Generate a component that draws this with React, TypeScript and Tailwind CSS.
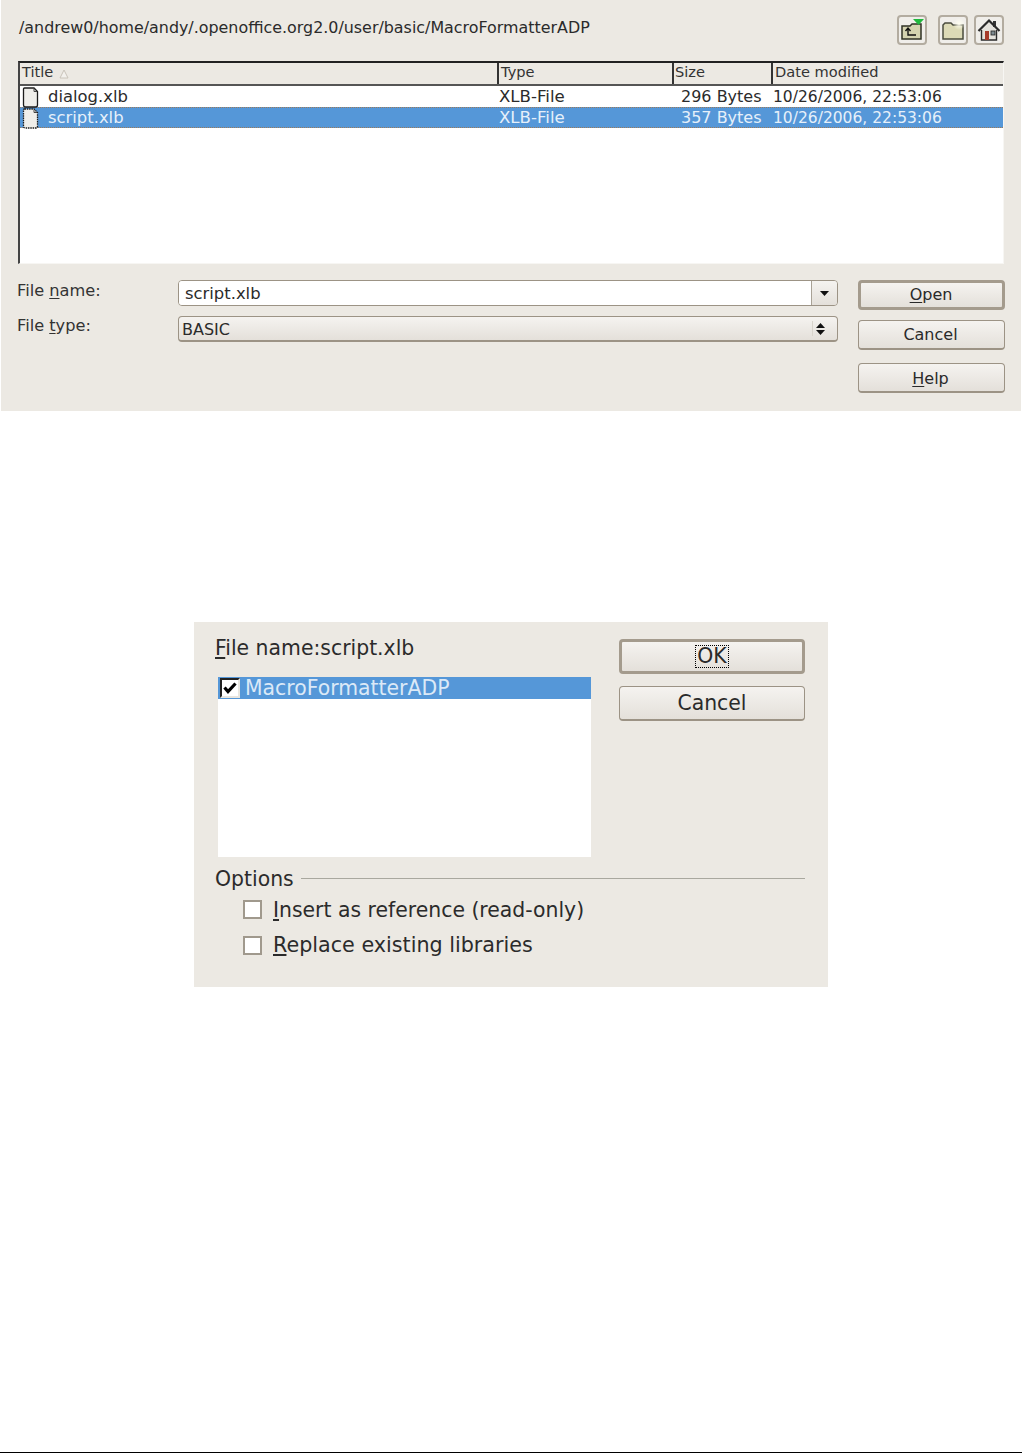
import React from "react";

const font = "font-['DejaVu_Sans',sans-serif]";

function FileIcon({ selected }: { selected?: boolean }) {
  return (
    <svg width="17" height="21" viewBox="0 0 17 21" className="shrink-0">
      <path d="M2.5 1H12L15.5 4.5V18Q15.5 20 13.5 20H3.5Q1.5 20 1.5 18V2Q1.5 1 2.5 1Z" fill="#efeeea" stroke="#1c1c1c" strokeWidth="1.3" strokeDasharray={selected ? "1.5 0.8" : undefined} />
      <path d="M12 1.5V4.5H15" fill="none" stroke="#444" strokeWidth="1" />
    </svg>
  );
}

function ToolBtn({ children }: { children: React.ReactNode }) {
  return (
    <div className="w-[30px] h-[30px] rounded-[4px] border-2 border-[#b3aca0] bg-[#f0eeea] flex items-center justify-center">
      {children}
    </div>
  );
}

function Btn({ children, def, h, focus }: { children: React.ReactNode; def?: boolean; h: string; focus?: boolean }) {
  return (
    <div className={`${h} w-full rounded-[4px] bg-gradient-to-b from-[#f5f3f0] to-[#e4e0da] flex items-center justify-center text-[#2a2a2a] ${def ? "border-[3px] border-[#a49b8d]" : "border border-[#9c9385] border-b-2"}`}>
      {focus ? <span className="border border-dotted border-black px-px leading-[21px]">{children}</span> : children}
    </div>
  );
}

function Cell({ w, children, className = "" }: { w: string; children: React.ReactNode; className?: string }) {
  return <div className={`${w} shrink-0 flex items-center h-full whitespace-nowrap ${className}`}>{children}</div>;
}

function Check() {
  return <div className="w-[19px] h-[19px] border-2 border-[#a0998d] bg-white shrink-0" />;
}

export default function App() {
  return (
    <div className={`${font} w-[1022px] h-[1453px] bg-white flex flex-col text-[#2b2b2b] overflow-hidden`}>
      {/* File dialog */}
      <div className="ml-px w-[1020px] h-[411px] bg-[#ece9e3] shrink-0 flex flex-col">
        <div className="h-[61px] flex items-start shrink-0">
          <div className="ml-[18px] mt-[18px] text-[15.9px] leading-5 whitespace-nowrap">/andrew0/home/andy/.openoffice.org2.0/user/basic/MacroFormatterADP</div>
          <div className="ml-auto mr-[17px] mt-[15px] flex">
            <ToolBtn>
              <svg width="24" height="24" viewBox="0 0 24 24">
                <path d="M2 8H10L12 6H21V21H2Z" fill="#d4d3b0" stroke="#2f3225" strokeWidth="1.5" />
                <path d="M13 1H24L18.5 7Z" fill="#1fb83c" />
                <path d="M8 11V17H16M5.5 13L8 10L10.5 13" fill="none" stroke="#111" strokeWidth="1.4" />
              </svg>
            </ToolBtn>
            <div className="ml-[11px]">
              <ToolBtn>
                <svg width="24" height="24" viewBox="0 0 24 24">
                  <defs>
                    <radialGradient id="glow"><stop offset="0" stopColor="#fffef0" /><stop offset="1" stopColor="#fffef0" stopOpacity="0" /></radialGradient>
                  </defs>
                  <path d="M2 7L4 5H10L12 7H22V21H2Z" fill="#dcdab6" stroke="#4a4c3e" strokeWidth="1.5" />
                  <circle cx="18" cy="6" r="6" fill="url(#glow)" />
                </svg>
              </ToolBtn>
            </div>
            <div className="ml-[6px]">
              <ToolBtn>
                <svg width="24" height="24" viewBox="0 0 24 24">
                  <rect x="16" y="3" width="3" height="6" fill="#333" />
                  <path d="M5 12L12 4L19 12V22H5Z" fill="#e4e2dc" />
                  <path d="M1.5 13L12 2.5L22.5 13" fill="none" stroke="#2a2a2a" strokeWidth="2.2" />
                  <path d="M4.5 12V22H19.5V12" fill="none" stroke="#2a2a2a" strokeWidth="1.4" />
                  <rect x="8" y="13" width="4" height="9" fill="#a63a2a" />
                  <rect x="14" y="13" width="4" height="4" fill="#7d8a90" stroke="#222" strokeWidth="0.8" />
                </svg>
              </ToolBtn>
            </div>
          </div>
        </div>

        {/* table */}
        <div className="ml-[17px] w-[986px] h-[203px] shrink-0 bg-white border-t-2 border-l-2 border-t-[#222] border-l-[#444] border-r border-b border-r-[#f7f6f3] border-b-[#f7f6f3]">
          <div className="h-[23px] flex bg-[#ece9e3] border-b-2 border-[#555] text-[14.6px] text-[#333]">
            <Cell w="w-[477px]" className="pl-[2px] gap-[6px] pb-[3px]">
              Title
              <svg width="10" height="10" viewBox="0 0 10 10" className="mt-1"><path d="M5 1L9 9H1Z" fill="#f3f1ed" stroke="#c9c4ba" /></svg>
            </Cell>
            <Cell w="w-[175px]" className="pl-[2px] pb-[3px] border-l-2 border-[#333]">Type</Cell>
            <Cell w="w-[99px]" className="pl-[1px] pb-[3px] border-l-2 border-[#333]">Size</Cell>
            <Cell w="w-[232px]" className="pl-[2px] pb-[3px] border-l-2 border-[#333]">Date modified</Cell>
          </div>
          <div className="h-[21px] flex pt-px">
            <Cell w="w-[478px]" className="pl-[2px] gap-[9px] text-[16.4px]"><FileIcon />dialog.xlb</Cell>
            <Cell w="w-[174px]" className="pl-[1px] text-[16.6px]">XLB-File</Cell>
            <Cell w="w-[99px]" className="pl-[9px] text-[16px]">296 Bytes</Cell>
            <Cell w="w-[232px]" className="pl-[2px] pt-px text-[15.5px]">10/26/2006, 22:53:06</Cell>
          </div>
          <div className="h-[21px] flex pt-px bg-[#5597d8] text-[#e6f0fa] border-y border-dotted border-y-[#9c7a5a]">
            <Cell w="w-[478px]" className="pl-[2px] gap-[9px] text-[16.4px]"><FileIcon selected />script.xlb</Cell>
            <Cell w="w-[174px]" className="pl-[1px] text-[16.6px]">XLB-File</Cell>
            <Cell w="w-[99px]" className="pl-[9px] text-[16px]">357 Bytes</Cell>
            <Cell w="w-[232px]" className="pl-[2px] pt-px text-[15.5px]">10/26/2006, 22:53:06</Cell>
          </div>
        </div>

        {/* form */}
        <div className="flex mt-[16px] text-[16px]">
          <div className="w-[177px] shrink-0 pl-[16px] flex flex-col text-[16.2px] text-[#333]">
            <div className="mt-px h-[20px] leading-5">File <u className="underline-offset-2">n</u>ame:</div>
            <div className="mt-[15px] h-[20px] leading-5">File <u className="underline-offset-2">t</u>ype:</div>
          </div>
          <div className="w-[660px] shrink-0 flex flex-col">
            <div className="h-[26px] flex rounded-[4px] border border-[#9c9385] overflow-hidden">
              <div className="flex-1 bg-white flex items-center pl-[6px] pt-[2px] text-[16.4px]">script.xlb</div>
              <div className="w-[26px] border-l border-[#a9a296] bg-gradient-to-b from-[#f5f3f0] to-[#e4e0da] flex items-center justify-center">
                <svg width="9" height="5" viewBox="0 0 9 5"><path d="M0 0H9L4.5 5Z" fill="#111" /></svg>
              </div>
            </div>
            <div className="mt-[10px] h-[26px] flex rounded-[4px] border border-[#9c9385] border-b-2 bg-gradient-to-b from-[#f5f3f0] to-[#e4e0da] overflow-hidden">
              <div className="flex-1 flex items-center pl-[3px] pt-[2px]">BASIC</div>
              <div className="w-[25px] my-1 pr-[10px] border-l border-[#d8d4cc] flex flex-col items-center justify-center gap-[2px]">
                <svg width="9" height="5" viewBox="0 0 9 5"><path d="M0 5H9L4.5 0Z" fill="#111" /></svg>
                <svg width="9" height="5" viewBox="0 0 9 5"><path d="M0 0H9L4.5 5Z" fill="#111" /></svg>
              </div>
            </div>
          </div>
          <div className="ml-[20px] w-[147px] shrink-0 flex flex-col">
            <Btn def h="h-[30px]"><span className="pr-px"><u className="underline-offset-2">O</u>pen</span></Btn>
            <div className="mt-[10px] w-full"><Btn h="h-[30px]"><span className="pt-px pr-[2px]">Cancel</span></Btn></div>
            <div className="mt-[13px] w-full"><Btn h="h-[30px]"><span className="pt-[2px] pr-[2px]"><u className="underline-offset-2">H</u>elp</span></Btn></div>
          </div>
        </div>
      </div>

      {/* Import dialog */}
      <div className="mt-[211px] ml-[194px] w-[634px] h-[365px] bg-[#ece9e3] shrink-0 flex text-[20.4px]">
        <div className="flex-1 min-w-0 flex flex-col pl-[21px]">
          <div className="flex">
            <div className="w-[404px] shrink-0 flex flex-col">
              <div className="mt-[13px] h-[26px] leading-[26px] whitespace-nowrap"><u className="underline-offset-2">F</u>ile name:script.xlb</div>
              <div className="mt-[16px] ml-[3px] w-[373px] h-[180px] bg-white">
                <div className="h-[22px] bg-[#5597d8] text-[#dbe9f7] flex items-center pl-[2px] gap-[5px] whitespace-nowrap">
                  <div className="w-[20px] h-[20px] border-2 border-l-[#222] border-t-[#222] border-r-[#e8e6e0] border-b-[#e8e6e0] bg-white flex items-center justify-center shrink-0">
                    <svg width="14" height="12" viewBox="0 0 14 12"><path d="M1.5 5.5L5 9.5L12.5 1.5" fill="none" stroke="#000" strokeWidth="3.2" /></svg>
                  </div>
                  <span className="pt-px">MacroFormatterADP</span>
                </div>
              </div>
            </div>
            <div className="w-[186px] shrink-0 flex flex-col mt-[17px] text-[#2b2b2b]">
              <Btn def focus h="h-[35px]">OK</Btn>
              <div className="mt-[12px] w-full"><Btn h="h-[35px]"><span className="pt-px">Cancel</span></Btn></div>
            </div>
          </div>
          <div className="mt-[8px] h-[26px] flex items-center gap-[7px] w-[590px]">
            <span className="pt-[2px]">Options</span>
            <div className="flex-1 border-t border-[#a9a89f]" />
          </div>
          <div className="mt-[5px] ml-[28px] h-[26px] flex items-center gap-[11px] whitespace-nowrap">
            <Check />
            <span className="pt-[2px]"><u className="underline-offset-2">I</u>nsert as reference (read-only)</span>
          </div>
          <div className="mt-[10px] ml-[28px] h-[26px] flex items-center gap-[11px] whitespace-nowrap">
            <Check />
            <span className="pt-px text-[20.7px]"><u className="underline-offset-2">R</u>eplace existing libraries</span>
          </div>
        </div>
      </div>

      <div className="mt-auto h-px bg-black shrink-0" />
    </div>
  );
}
